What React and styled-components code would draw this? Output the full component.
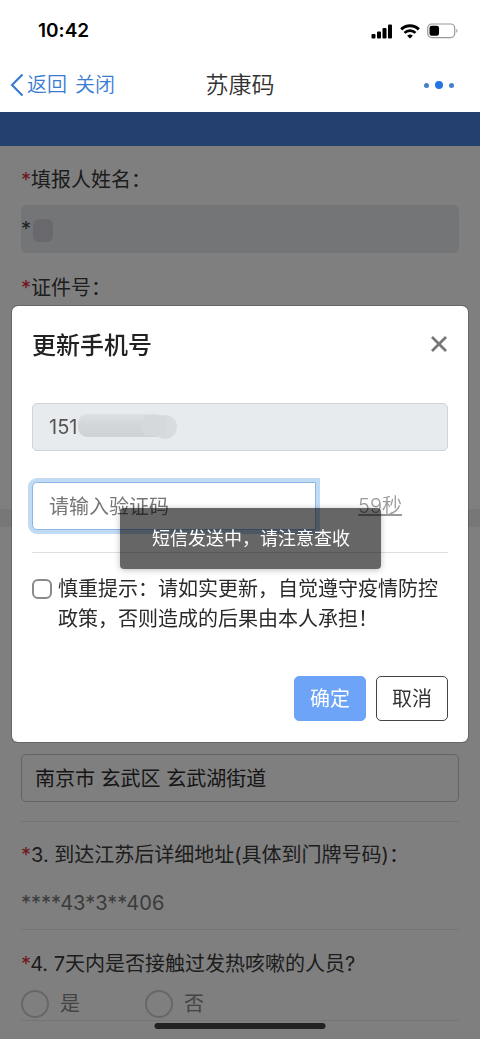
import React, { useState } from "react";
import styled, { createGlobalStyle, css } from "styled-components";

// ================= Global =================

const GlobalStyle = createGlobalStyle`
  * {
    box-sizing: border-box;
  }

  body {
    margin: 0;
    background: #fff;
    color: #333;
    font-family: Inter, "Noto Sans CJK SC", sans-serif;
    font-size: 20px;
    font-variant-ligatures: no-contextual;
    line-height: 30px;
  }

  button,
  input {
    font: inherit;
    margin: 0;
  }
`;

// ================= Header =================

const StatusBar = styled.div`
  height: 56px;
  padding: 6px 22px 0 38px;
  display: flex;
  align-items: center;
  justify-content: space-between;
  color: #000;
  font-size: 19px;
  font-weight: 600;
`;

const StatusIcons = styled.div`
  display: flex;
  align-items: center;
  gap: 7px;

  svg {
    display: block;
  }
`;

const NavBar = styled.header`
  height: 56px;
  padding: 2px 10px 0;
  display: grid;
  grid-template-columns: 1fr auto 1fr;
  align-items: center;
  background: #fff;
`;

const NavLinks = styled.nav`
  display: flex;
  align-items: center;
  gap: 8px;
`;

const NavLink = styled.a`
  display: flex;
  align-items: center;
  gap: 3px;
  color: #3a7cd2;
  font-weight: 350;
  text-decoration: none;
`;

const NavTitle = styled.h1`
  margin: 0;
  font-size: 23px;
  font-weight: 350;
`;

const MoreBtn = styled.button`
  justify-self: end;
  display: flex;
  align-items: center;
  gap: 6px;
  padding: 0 16px;
  border: none;
  background: none;
`;

const Dot = styled.span`
  width: ${(p) => (p.$big ? "8px" : "5px")};
  height: ${(p) => (p.$big ? "8px" : "5px")};
  border-radius: 50%;
  background: ${(p) => (p.$big ? "#2374e6" : "#4481cc")};
`;

// ================= Form page =================

const Banner = styled.div`
  height: 34px;
  background: #4880de;
`;

const Section = styled.section`
  padding: ${(p) => (p.$tall ? "19px 21px 146px" : "0 21px 16px")};
  border-bottom: ${(p) => (p.$tall ? "18px solid #eee" : "none")};
`;

const Label = styled.label`
  display: block;
  color: #3a3a3a;
`;

const Star = styled.span`
  color: #e0303c;
`;

const field = css`
  display: block;
  width: 100%;
  height: 48px;
  border-radius: 5px;
  outline: none;
`;

const PlainField = styled.input`
  ${field}
  padding: 0;
  border: none;
  background: #e6eaee;
  color: #444;
`;

const SelectField = styled.button`
  ${field}
  margin-top: 227px;
  padding: 2px 13px 0;
  border: 1px solid #c8c8c8;
  background: none;
  color: #2c2c2c;
  text-align: left;
`;

const MaskedField = styled.div`
  position: relative;
  margin: ${(p) => p.$margin || "0"};

  svg {
    position: absolute;
    top: ${(p) => p.$top};
    left: ${(p) => p.$left};
  }
`;

const Divider = styled.hr`
  height: 1px;
  margin: ${(p) => p.$margin};
  border: none;
  background: ${(p) => p.$color || "#ebebeb"};
`;

const Answer = styled.p`
  margin: 18px 0 0;
  color: #777;
`;

const Radios = styled.fieldset`
  margin: 0;
  padding: 0;
  border: none;

  legend {
    padding: 0;
  }
`;

const RadioRow = styled.div`
  display: flex;
  margin-top: 10px;
`;

const RadioOption = styled.label`
  display: flex;
  align-items: center;
  gap: 11px;
  width: 124px;
  height: 30px;
  color: #888;

  input {
    appearance: none;
    width: 28px;
    height: 28px;
    border: 2px solid #cfcfcf;
    border-radius: 50%;
  }
`;

// ================= Modal =================

const Overlay = styled.div`
  position: fixed;
  inset: 112px 0 0;
  padding: 194px 12px 0;
  background: rgba(0, 0, 0, 0.5);
`;

const Modal = styled.form`
  padding: 0 20px 21px;
  border-radius: 6px;
  background: #fff;
  box-shadow: 0 0 0 1px rgba(0, 0, 0, 0.2);
`;

const ModalHeader = styled.div`
  height: 78px;
  margin-bottom: 19px;
  display: flex;
  align-items: center;
  justify-content: space-between;
`;

const ModalTitle = styled.h2`
  margin: 0;
  padding-top: 2px;
  color: #222;
  font-size: 24px;
  font-weight: 500;
`;

const CloseBtn = styled.button`
  display: flex;
  padding: 0;
  border: none;
  background: none;
`;

const PhoneField = styled.input`
  ${field}
  padding: 0 16px;
  border: 1px solid #d0d4d8;
  background: #e7ebee;
  color: #555;
`;

const CodeRow = styled.div`
  display: flex;
  align-items: center;
  margin-top: 31px;
`;

const CodeField = styled.input`
  ${field}
  flex: 1;
  min-width: 0;
  padding: 2px 16px 0;
  border: 1px solid #8cb8e8;
  border-radius: 5px 0 0 5px;
  background: #fff;
  box-shadow: 0 0 0 4px #c2dbf5;

  &::placeholder {
    color: #777;
    opacity: 1;
  }
`;

const Countdown = styled.span`
  width: 132px;
  padding-right: 4px;
  text-align: center;
  color: #999;
  font-weight: 350;
  text-decoration: underline;
`;

const Notice = styled.label`
  display: flex;
  align-items: flex-start;
  gap: 6px;
  color: #2a2a2a;

  input {
    appearance: none;
    flex: none;
    width: 20px;
    height: 20px;
    margin-top: 5px;
    border: 2px solid #8a8a8a;
    border-radius: 6px;
    background: #fff;
  }
`;

const Actions = styled.div`
  display: flex;
  justify-content: flex-end;
  gap: 10px;
  margin-top: 42px;
`;

const ActionBtn = styled.button`
  width: 72px;
  height: 45px;
  padding: 0;
  border: 1px solid ${(p) => (p.$primary ? "#6da4f8" : "#444")};
  border-radius: 5px;
  background: ${(p) => (p.$primary ? "#6da4f8" : "#fff")};
  color: ${(p) => (p.$primary ? "#fff" : "#333")};
`;

const Toast = styled.div`
  position: absolute;
  top: 396px;
  left: 25%;
  padding: 16px 31px 15px 32px;
  border-radius: 4px;
  background: rgba(0, 0, 0, 0.6);
  box-shadow: 0 1px 6px rgba(0, 0, 0, 0.25);
  color: #fff;
  font-size: 18px;
  white-space: nowrap;
`;

const HomeIndicator = styled.div`
  position: fixed;
  bottom: 10px;
  left: 50%;
  width: 171px;
  height: 6px;
  border-radius: 3px;
  background: #222;
  transform: translateX(-50%);
`;

// ================= Icons =================

const SignalIcon = () => (
  <svg width="22" height="15" viewBox="0 0 22 15">
    <rect x="0.5" y="10" width="4" height="4.5" rx="1" />
    <rect x="6" y="7.5" width="4" height="7" rx="1" />
    <rect x="11.5" y="4" width="4" height="10.5" rx="1" />
    <rect x="17" y="0.5" width="4" height="14" rx="1" />
  </svg>
);

const WifiIcon = () => (
  <svg width="20" height="15" viewBox="0 0 20 15" fill="none" stroke="#000">
    <path d="M1.2 5.3a12.7 12.7 0 0 1 17.6 0" strokeWidth="3" />
    <path d="M4.5 8.9a7.9 7.9 0 0 1 11 0" strokeWidth="2.7" />
    <path d="M10 14.5 7.1 11.8a4.2 4.2 0 0 1 5.8 0Z" fill="#000" stroke="none" />
  </svg>
);

const BatteryIcon = () => (
  <svg width="31" height="16" viewBox="0 0 31 16">
    <rect x="0.7" y="1" width="27" height="13.6" rx="4" fill="none" stroke="#999" strokeWidth="1.2" />
    <rect x="2.5" y="2.8" width="9.5" height="10" rx="2.2" />
    <path d="M29.3 5.8c1.6.7 1.6 3.3 0 4Z" fill="#999" />
  </svg>
);

const BackIcon = () => (
  <svg width="14" height="24" viewBox="0 0 14 24" fill="none" stroke="currentColor" strokeWidth="2.2">
    <path d="M12.5 1.5 2 12l10.5 10.5" />
  </svg>
);

const CloseIcon = () => (
  <svg width="18" height="18" viewBox="0 0 18 18" stroke="#777" strokeWidth="2.8">
    <path d="M2 1l14 14M16 1 2 15" />
  </svg>
);

const NameMask = () => (
  <svg width="22" height="24" viewBox="0 0 22 24">
    <rect x="1" y="0" width="20" height="23" rx="6" fill="#d3d3da" />
  </svg>
);

const PhoneMask = () => (
  <svg width="100" height="27" viewBox="0 0 100 27">
    <defs>
      <linearGradient id="smudge" x1="0" y1="0" x2="0" y2="1">
        <stop offset="0" stopColor="#dee1e4" />
        <stop offset="0.5" stopColor="#d3d6d9" />
        <stop offset="1" stopColor="#cfd2d5" />
      </linearGradient>
    </defs>
    <circle cx="87" cy="14" r="12" fill="#d9dcdf" />
    <rect x="0" y="1" width="86" height="23" rx="9" fill="url(#smudge)" />
    <rect x="64" y="2" width="24" height="21" rx="6" fill="#d6d9dc" />
  </svg>
);

// ================= Component =================

export default function App() {
  const [agreed, setAgreed] = useState(false);
  const [code, setCode] = useState("");

  return (
    <>
      <GlobalStyle />
      <StatusBar>
        <span>10:42</span>
        <StatusIcons>
          <SignalIcon />
          <WifiIcon />
          <BatteryIcon />
        </StatusIcons>
      </StatusBar>
      <NavBar>
        <NavLinks>
          <NavLink href="#back">
            <BackIcon />
            返回
          </NavLink>
          <NavLink href="#close">关闭</NavLink>
        </NavLinks>
        <NavTitle>苏康码</NavTitle>
        <MoreBtn type="button">
          <Dot />
          <Dot $big />
          <Dot />
        </MoreBtn>
      </NavBar>

      <main>
        <Banner />
        <Section $tall>
          <Label htmlFor="name">
            <Star>*</Star>填报人姓名：
          </Label>
          <MaskedField $margin="10px 0 20px" $top="14px" $left="11px">
            <PlainField id="name" value="*" readOnly />
            <NameMask />
          </MaskedField>
          <Label htmlFor="idcard">
            <Star>*</Star>证件号：
          </Label>
          <MaskedField $margin="12px 0 0">
            <PlainField id="idcard" readOnly />
          </MaskedField>
        </Section>

        <Section>
          <SelectField type="button">南京市 玄武区 玄武湖街道</SelectField>
          <Divider $margin="19px 0 18px" />
          <Label as="div">
            <Star>*</Star>3. 到达江苏后详细地址(具体到门牌号码)：
          </Label>
          <Answer>****43*3**406</Answer>
          <Divider $margin="11px 0 19px" />
          <Radios>
            <Label as="legend">
              <Star>*</Star>4. 7天内是否接触过发热咳嗽的人员?
            </Label>
            <RadioRow>
              <RadioOption>
                <input type="radio" name="contact" />是
              </RadioOption>
              <RadioOption>
                <input type="radio" name="contact" />否
              </RadioOption>
            </RadioRow>
          </Radios>
          <Divider $margin="1px 0 0" />
        </Section>
      </main>

      <Overlay>
        <Modal role="dialog" aria-labelledby="modal-title">
          <ModalHeader>
            <ModalTitle id="modal-title">更新手机号</ModalTitle>
            <CloseBtn type="button">
              <CloseIcon />
            </CloseBtn>
          </ModalHeader>
          <MaskedField $top="10px" $left="46px">
            <PhoneField type="tel" value="151" readOnly />
            <PhoneMask />
          </MaskedField>
          <CodeRow>
            <CodeField
              placeholder="请输入验证码"
              value={code}
              onChange={(e) => setCode(e.target.value)}
            />
            <Countdown>59秒</Countdown>
          </CodeRow>
          <Divider $margin="22px 0 21px" $color="#dedede" />
          <Notice>
            <input
              type="checkbox"
              checked={agreed}
              onChange={(e) => setAgreed(e.target.checked)}
            />
            <span>慎重提示：请如实更新，自觉遵守疫情防控政策，否则造成的后果由本人承担！</span>
          </Notice>
          <Actions>
            <ActionBtn type="button" $primary>确定</ActionBtn>
            <ActionBtn type="button">取消</ActionBtn>
          </Actions>
        </Modal>
        <Toast role="status">短信发送中，请注意查收</Toast>
      </Overlay>
      <HomeIndicator />
    </>
  );
}
